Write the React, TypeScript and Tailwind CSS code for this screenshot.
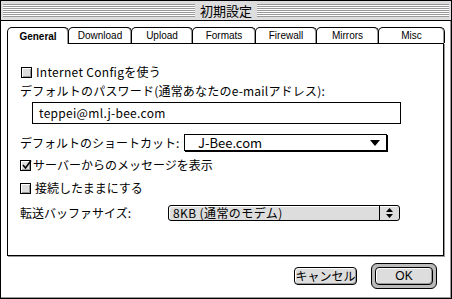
import React from "react";

const tabs = [
  { label: "General", w: "w-[62px]", active: true },
  { label: "Download", w: "w-[64px]" },
  { label: "Upload", w: "w-[62px]" },
  { label: "Formats", w: "w-[64px]" },
  { label: "Firewall", w: "w-[62px]" },
  { label: "Mirrors", w: "w-[63px]" },
  { label: "Misc", w: "w-[67px]" },
];

// Mac OS 8 style checkbox
const CheckBox = ({ checked }: { checked?: boolean }) => (
  <div className="relative w-[11px] h-[11px] shrink-0 border border-black bg-[#dddddd] shadow-[inset_1px_1px_0_#ffffff,inset_-1px_-1px_0_#999999]">
    {checked && (
      <svg
        className="absolute -top-[2px] left-0"
        width="12"
        height="12"
        viewBox="0 0 12 12"
      >
        <path d="M2 6 L4.5 9 L10 1.5" stroke="#000" strokeWidth="1.6" fill="none" />
      </svg>
    )}
  </div>
);

const App = () => {
  return (
    <div className="w-[452px] h-[299px] bg-white border border-black shadow-[inset_-1px_-1px_0_#999999] overflow-hidden font-[family-name:'Noto_Sans_CJK_JP',sans-serif] text-black">
      {/* title bar */}
      <div className="h-[20px] bg-[#dddddd] border-b border-black flex items-center px-[2px]">
        <div className="flex-1 h-[13px] bg-[repeating-linear-gradient(to_bottom,#999999_0px,#999999_1px,#ffffff_1px,#ffffff_2px)] border-b border-[#999999]" />
        <div className="px-[5px] text-[13px] leading-[18px]">初期設定</div>
        <div className="flex-1 h-[13px] bg-[repeating-linear-gradient(to_bottom,#999999_0px,#999999_1px,#ffffff_1px,#ffffff_2px)] border-b border-[#999999]" />
      </div>

      {/* tabs */}
      <div className="h-[22px] flex items-end ml-[6px]">
        {tabs.map((t, i) => (
          <div
            key={t.label}
            className={
              t.w +
              " shrink-0 flex items-center justify-center border-t border-l border-r border-black rounded-t-[5px] bg-white shadow-[inset_-1px_0_0_#999999] text-[10px] font-[family-name:'Liberation_Sans',sans-serif] " +
              (i > 0 ? "-ml-px " : "") +
              (t.active
                ? "h-[17px] -mb-px relative z-10 font-bold"
                : "h-[16px]")
            }
          >
            {t.label}
          </div>
        ))}
      </div>

      {/* panel */}
      <div className="ml-[6px] w-[437px] h-[213px] border border-black shadow-[1px_1px_0_#999999] pl-[12px] pt-[18px] text-[12px]">
        <div className="h-[20px] flex items-center gap-[4px] pl-px">
          <CheckBox />
          <span className="tracking-[0.3px]">Internet Configを使う</span>
        </div>
        <div className="h-[18px] flex items-center tracking-[0.2px]">
          デフォルトのパスワード(通常あなたのe-mailアドレス):
        </div>
        <div className="mt-[2px] ml-[12px] w-[369px] h-[22px] border border-black flex items-center pl-[6px] text-[12px] tracking-[0.3px]">
          teppei@ml.j-bee.com
        </div>

        <div className="mt-[10px] h-[17px] flex items-center">
          <div className="w-[164px]">デフォルトのショートカット:</div>
          <div className="w-[203px] h-[17px] border border-black shadow-[1px_1px_0_#000000] flex items-center justify-between pl-[13px] pr-[6px] text-[13px]">
            <span>J-Bee.com</span>
            <svg width="10" height="6" viewBox="0 0 10 6">
              <path d="M0 0 H10 L5 6 Z" fill="#000" />
            </svg>
          </div>
        </div>

        <div className="mt-[5px] h-[18px] flex items-center gap-[2px]">
          <CheckBox checked />
          <span>サーバーからのメッセージを表示</span>
        </div>
        <div className="mt-[5px] h-[18px] flex items-center gap-[4px]">
          <CheckBox />
          <span>接続したままにする</span>
        </div>

        <div className="mt-[8px] h-[16px] flex items-center">
          <div className="w-[148px]">転送バッファサイズ:</div>
          <div className="w-[232px] h-[16px] border border-black rounded-[3px] bg-[#dddddd] shadow-[inset_1px_1px_0_#ffffff] flex items-stretch">
            <div className="flex-1 flex items-center pl-[4px] tracking-[0.4px]">8KB (通常のモデム)</div>
            <div className="w-[20px] border-l border-black flex items-center justify-center">
              <svg width="7" height="10" viewBox="0 0 7 10">
                <path d="M0 4 L3.5 0 L7 4 Z M0 6 L3.5 10 L7 6 Z" fill="#000" />
              </svg>
            </div>
          </div>
        </div>
      </div>

      {/* buttons */}
      <div className="mt-[7px] flex items-center justify-end gap-[14px] pr-[14px] text-[12px]">
        <button className="w-[63px] h-[18px] border border-black rounded-[4px] bg-[#dddddd] shadow-[inset_1px_1px_0_#ffffff,inset_-1px_-1px_0_#999999] flex items-center justify-center">
          キャンセル
        </button>
        <div className="w-[66px] h-[26px] border border-black rounded-[6px] bg-[#bbbbbb] p-[3px]">
          <button className="w-full h-full border border-black rounded-[4px] bg-[#dddddd] shadow-[inset_1px_1px_0_#ffffff,inset_-1px_-1px_0_#999999] flex items-center justify-center font-[family-name:'Liberation_Sans',sans-serif]">
            OK
          </button>
        </div>
      </div>
    </div>
  );
};

export default App;
